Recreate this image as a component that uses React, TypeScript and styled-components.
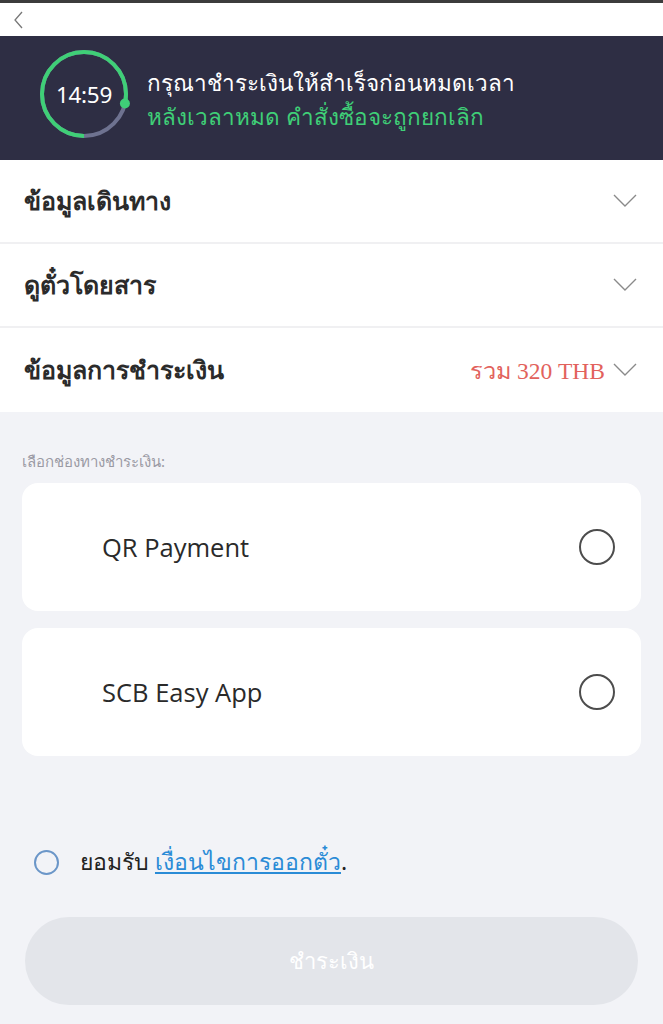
import React from "react";
import styled, { createGlobalStyle } from "styled-components";

const Global = createGlobalStyle`
  html, body { margin: 0; padding: 0; background: #f2f3f7; }
  body { font-family: "Noto Sans", "Open Sans", sans-serif; }
  * { box-sizing: border-box; }
`;

const Page = styled.div`
  width: 663px;
  min-height: 1024px;
  background: #f2f3f7;
  display: flex;
  flex-direction: column;
  border-top: 3px solid #3c3c3c;
`;

const TopBar = styled.div`
  height: 33px;
  background: #fff;
  display: flex;
  align-items: center;
  padding-left: 13px;
`;

const Banner = styled.div`
  height: 124px;
  background: #2e2e44;
  display: flex;
  align-items: flex-start;
  padding-left: 38px;
  gap: 17px;
`;

const Timer = styled.div`
  position: relative;
  width: 92px;
  height: 92px;
  margin-top: 12px;
  flex: none;
  display: flex;
  align-items: center;
  justify-content: center;
`;

const TimerText = styled.span`
  position: relative;
  color: #fff;
  font-size: 22.5px;
  font-family: "Noto Sans", sans-serif;
  letter-spacing: -0.3px;
`;

const TimerSvg = styled.svg`
  position: absolute;
  inset: 0;
`;

const BannerText = styled.div`
  display: flex;
  flex-direction: column;
  margin-top: 30px;
`;

const BannerLine = styled.div<{ $green?: boolean }>`
  font-size: 22.5px;
  line-height: 34px;
  color: ${(p) => (p.$green ? "#3fcf77" : "#ffffff")};
`;

const Accordion = styled.div`
  background: #fff;
  display: flex;
  flex-direction: column;
`;

const Row = styled.div<{ $last?: boolean }>`
  height: 84px;
  display: flex;
  align-items: center;
  padding: 0 26px 0 24px;
  border-bottom: ${(p) => (p.$last ? "none" : "2px solid #f0f0f2")};
`;

const RowTitle = styled.div`
  flex: 1;
  font-size: 25px;
  font-weight: 700;
  color: #2b2b2b;
`;

const Total = styled.span`
  font-family: "Liberation Serif", serif;
  font-size: 23.5px;
  color: #e2625c;
  margin-right: 8px;
`;

const Section = styled.div`
  padding: 0 22px;
  display: flex;
  flex-direction: column;
`;

const Label = styled.div`
  font-size: 15px;
  color: #9a9aa4;
  margin-top: 40px;
  margin-bottom: 13px;
  line-height: 18px;
`;

const Cards = styled.div`
  display: flex;
  flex-direction: column;
  gap: 17px;
`;

const Card = styled.div`
  height: 128px;
  background: #fff;
  border-radius: 16px;
  display: flex;
  align-items: center;
  padding: 0 26px 0 80px;
`;

const CardTitle = styled.div`
  flex: 1;
  font-family: "Open Sans", sans-serif;
  font-size: 25.5px;
  color: #2a2a2a;
`;

const Radio = styled.span`
  width: 36px;
  height: 36px;
  border-radius: 50%;
  border: 2px solid #4d4d4d;
`;

const Agree = styled.div`
  display: flex;
  align-items: center;
  height: 40px;
  margin-top: 86px;
  padding-left: 34px;
  gap: 21px;
  font-size: 23px;
  color: #222;
`;

const SmallRadio = styled.span`
  width: 25px;
  height: 25px;
  border-radius: 50%;
  border: 2px solid #6b96c8;
  flex: none;
`;

const Link = styled.a`
  color: #2a8bd6;
  text-decoration: underline;
`;

const PayButton = styled.button`
  margin: 35px 25px 0 25px;
  height: 88px;
  border: none;
  border-radius: 44px;
  background: #e3e5ea;
  color: #fff;
  font-size: 22px;
  font-weight: 400;
  font-family: inherit;
`;

const Chevron = () => (
  <svg width="24" height="14" viewBox="0 0 24 14">
    <path d="M1 1 L12 12 L23 1" fill="none" stroke="#8a8a8a" strokeWidth="1.4" />
  </svg>
);

export default function App() {
  const r = 42;
  const c = 2 * Math.PI * r;
  const greenFrac = 283 / 360;
  const dotAngle = 13 * (Math.PI / 180);
  return (
    <Page>
      <Global />
      <TopBar>
        <svg width="12" height="18" viewBox="0 0 12 18">
          <path d="M9 1 L2 9 L9 17" fill="none" stroke="#777" strokeWidth="1.3" />
        </svg>
      </TopBar>
      <Banner>
        <Timer>
          <TimerSvg width="92" height="92" viewBox="0 0 92 92">
            <circle cx="46" cy="46" r={r} fill="none" stroke="#6e7290" strokeWidth="4" />
            <circle
              cx="46"
              cy="46"
              r={r}
              fill="none"
              stroke="#3fcf77"
              strokeWidth="4"
              strokeDasharray={`${c * greenFrac} ${c}`}
              transform="rotate(90 46 46)"
            />
            <circle
              cx={46 + r * Math.cos(dotAngle)}
              cy={46 + r * Math.sin(dotAngle)}
              r="5"
              fill="#3fcf77"
            />
          </TimerSvg>
          <TimerText>14:59</TimerText>
        </Timer>
        <BannerText>
          <BannerLine>กรุณาชำระเงินให้สำเร็จก่อนหมดเวลา</BannerLine>
          <BannerLine $green>หลังเวลาหมด คำสั่งซื้อจะถูกยกเลิก</BannerLine>
        </BannerText>
      </Banner>
      <Accordion>
        <Row>
          <RowTitle>ข้อมูลเดินทาง</RowTitle>
          <Chevron />
        </Row>
        <Row>
          <RowTitle>ดูตั๋วโดยสาร</RowTitle>
          <Chevron />
        </Row>
        <Row $last>
          <RowTitle>ข้อมูลการชำระเงิน</RowTitle>
          <Total>รวม 320 THB</Total>
          <Chevron />
        </Row>
      </Accordion>
      <Section>
        <Label>เลือกช่องทางชำระเงิน:</Label>
        <Cards>
          <Card>
            <CardTitle>QR Payment</CardTitle>
            <Radio />
          </Card>
          <Card>
            <CardTitle>SCB Easy App</CardTitle>
            <Radio />
          </Card>
        </Cards>
      </Section>
      <Agree>
        <SmallRadio />
        <span>
          ยอมรับ <Link>เงื่อนไขการออกตั๋ว</Link>.
        </span>
      </Agree>
      <PayButton>ชำระเงิน</PayButton>
    </Page>
  );
}
